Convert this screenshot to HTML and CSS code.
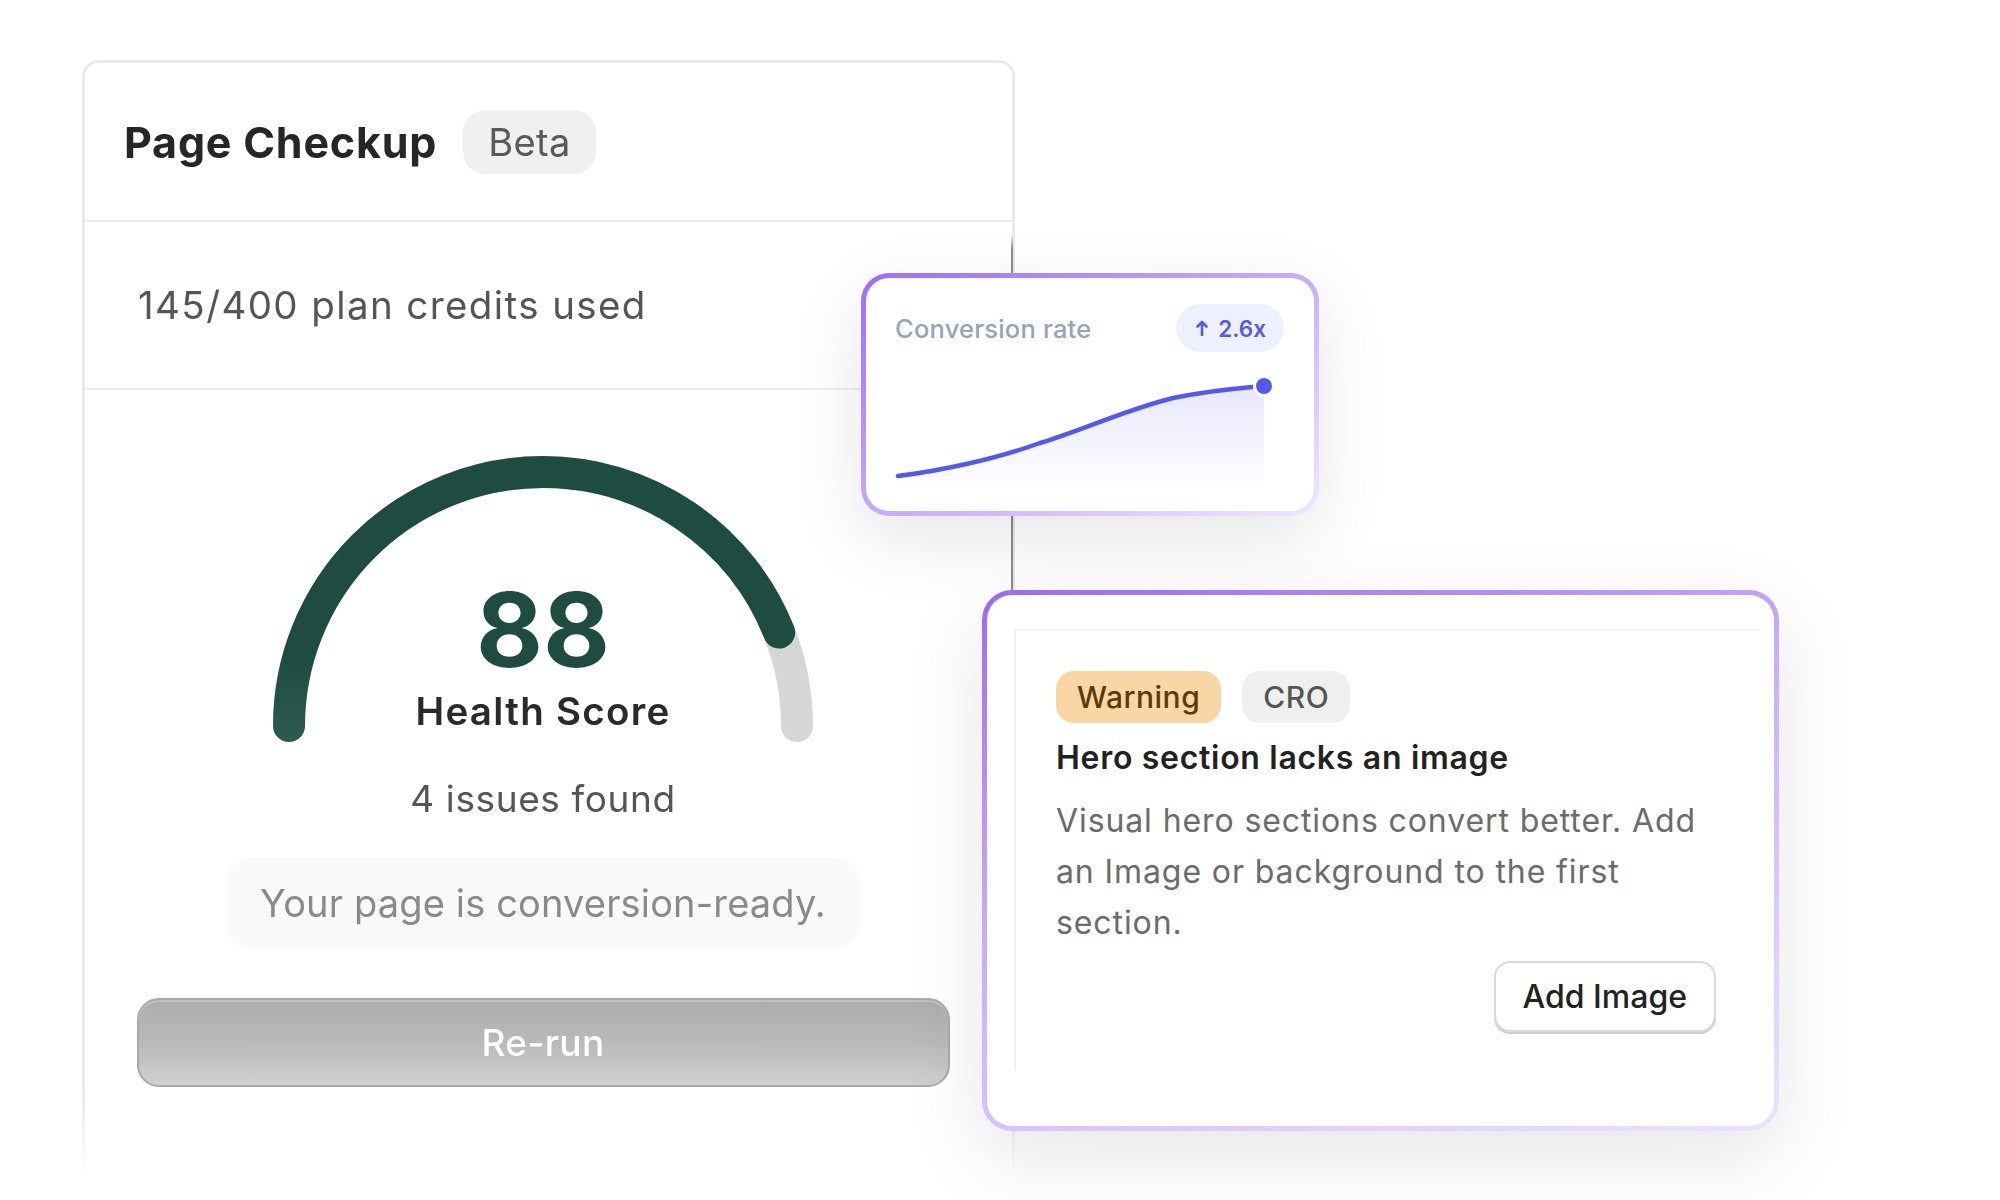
FILE: index.html
```html
<!DOCTYPE html>
<html lang="en">
<head>
    <meta charset="UTF-8">
    <meta name="viewport" content="width=device-width, initial-scale=1.0">
    <title>Page Checkup</title>
    <link rel="stylesheet" href="styles.css">
</head>
<body>

<div class="stage">

    <section class="checkup">
        <header class="checkup-head">
            <h1>Page Checkup</h1>
            <span class="tag">Beta</span>
        </header>
        <div class="credits">145/400 plan credits used</div>
        <div class="checkup-body">
            <div class="gauge">
                <svg class="gauge-arc" width="560" height="290" viewBox="0 0 560 290">
                    <defs>
                        <linearGradient id="arcGreen" gradientUnits="userSpaceOnUse" x1="0" y1="200" x2="0" y2="290">
                            <stop offset="0" stop-color="#1f4c40"/>
                            <stop offset="1" stop-color="#2f5c51"/>
                        </linearGradient>
                    </defs>
                    <!-- track -->
                    <path d="M26,270 A254,254 0 0 1 534,270" fill="none" stroke="#d6d6d6" stroke-width="32" stroke-linecap="round"/>
                    <!-- score, 88 of 100 -->
                    <path d="M26,270 A254,254 0 0 1 534,270" fill="none" stroke="url(#arcGreen)" stroke-width="32" stroke-linecap="round" pathLength="100" stroke-dasharray="88 100"/>
                </svg>
                <div class="score">
                    <div class="score-num">88</div>
                    <div class="score-label">Health Score</div>
                </div>
            </div>
            <p class="issues">4 issues found</p>
            <p class="verdict">Your page is conversion-ready.</p>
            <button class="rerun">Re-run</button>
        </div>
    </section>

    <div class="connector"></div>

    <!-- floating metric card -->
    <div class="rate-card">
        <div class="rate-head">
            <span class="rate-title">Conversion rate</span>
            <span class="rate-badge">
                <svg width="12" height="16" viewBox="0 0 12 16">
                    <path d="M6 15V2M1.5 6.5L6 2l4.5 4.5" fill="none" stroke="#5558f0" stroke-width="2.6" stroke-linecap="round" stroke-linejoin="round"/>
                </svg>
                2.6x
            </span>
        </div>
        <svg class="rate-chart" width="380" height="135" viewBox="0 0 380 135">
            <defs>
                <linearGradient id="areaFill" x1="0" y1="0" x2="0" y2="1">
                    <stop offset="0" stop-color="#5558f0" stop-opacity="0.14"/>
                    <stop offset="1" stop-color="#5558f0" stop-opacity="0"/>
                </linearGradient>
            </defs>
            <path d="M3,116 C43,111 98,100 145,83 C188,70 230,50 278,38 C318,30 348,28 369,26 L369,132 L3,132 Z" fill="url(#areaFill)"/>
            <path d="M3,116 C43,111 98,100 145,83 C188,70 230,50 278,38 C318,30 348,28 369,26" fill="none" stroke="#5558f0" stroke-width="4.5" stroke-linecap="round"/>
            <circle cx="369" cy="26" r="9.5" fill="#5558f0" stroke="#fff" stroke-width="3"/>
        </svg>
    </div>

    <!-- floating issue card -->
    <div class="issue-card">
        <div class="issue-frame">
            <div class="issue-tags">
                <span class="pill pill-warn">Warning</span>
                <span class="pill">CRO</span>
            </div>
            <h2 class="issue-title">Hero section lacks an image</h2>
            <p class="issue-text">Visual hero sections convert better. Add an Image or background to the first section.</p>
            <div class="issue-actions">
                <button class="add-btn">Add Image</button>
            </div>
        </div>
    </div>

</div>

</body>
</html>
```

FILE: styles.css
```css
* {
    box-sizing: border-box;
}
body {
    margin: 0;
    background: #fff;
    font-family: "Inter", "Liberation Sans", sans-serif;
    color: #222;
}
.stage {
    position: relative;
    width: 2000px;
    height: 1200px;
    overflow: hidden;
}

/* main card */
.checkup {
    width: 933px;
    height: 1120px;
    margin: 60px 0 0 82px;
    border: 3px solid #e9e9e9;
    border-bottom: none;
    border-radius: 16px 16px 0 0;
    background: #fff;
    -webkit-mask-image: linear-gradient(to bottom, #000 calc(100% - 90px), transparent);
    mask-image: linear-gradient(to bottom, #000 calc(100% - 90px), transparent);
}
.checkup-head {
    height: 159px;
    display: flex;
    align-items: center;
    gap: 26px;
    padding-left: 39px;
    border-bottom: 2px solid #ececec;
}
.checkup-head h1 {
    margin: 0;
    font-size: 43px;
    font-weight: 700;
    letter-spacing: 0.8px;
    color: #262626;
}
.tag {
    height: 64px;
    padding: 0 25px;
    border-radius: 22px;
    background: #f0f0f0;
    color: #5a5a5a;
    font-size: 38px;
    letter-spacing: 0.4px;
    line-height: 64px;
}
.credits {
    height: 168px;
    display: flex;
    align-items: center;
    padding-left: 53px;
    border-bottom: 2px solid #ececec;
    font-size: 38.5px;
    letter-spacing: 1.4px;
    color: #555;
}
.checkup-body {
    display: flex;
    flex-direction: column;
    align-items: center;
    padding: 66px 61px 0 50px;
}

.gauge {
    display: grid;
    justify-items: center;
}
.gauge > * {
    grid-area: 1 / 1;
}
.gauge-arc {
    display: block;
}
.score {
    padding-top: 122px;
    text-align: center;
}
.score-num {
    font-size: 103px;
    line-height: 1;
    font-weight: 700;
    color: #1f4c40;
}
.score-label {
    margin-top: 7px;
    font-size: 38.5px;
    line-height: 1.2;
    font-weight: 600;
    letter-spacing: 1.3px;
    color: #2a2a2a;
}
.issues {
    margin: 31px 0 0;
    font-size: 37px;
    line-height: 1.2;
    letter-spacing: 0.6px;
    color: #555;
}
.verdict {
    margin: 37px 0 0;
    height: 90px;
    padding: 0 34px;
    border-radius: 24px;
    background: #fafafa;
    font-size: 38px;
    line-height: 90px;
    letter-spacing: 0.15px;
    color: #8a8a8a;
}
.rerun {
    margin-top: 50px;
    width: 813px;
    height: 89px;
    border: 2px solid #a9a9a9;
    border-radius: 22px;
    background: linear-gradient(to bottom, #adadad, #b9b9b9 50%, #d0d0d0);
    box-shadow: inset 0 2px 0 rgba(255,255,255,0.25);
    font-family: inherit;
    font-size: 37px;
    font-weight: 500;
    letter-spacing: 0.3px;
    color: #fff;
}

.connector {
    position: absolute;
    left: 1011px;
    top: 235px;
    width: 2px;
    height: 355px;
    background: linear-gradient(to bottom, rgba(140,140,140,0), #8c8c8c 14px);
}

/* conversion rate card */
.rate-card {
    position: absolute;
    left: 861px;
    top: 273px;
    width: 458px;
    height: 243px;
    padding: 26px 30px 0 29px;
    border: 5px solid transparent;
    border-radius: 28px;
    background:
        linear-gradient(#fff, #fff) padding-box,
        linear-gradient(150deg, #9e6cf7, #c2a6fb 45%, #efe7fe) border-box;
    box-shadow: 0 22px 70px rgba(0,0,0,0.10);
}
.rate-head {
    display: flex;
    justify-content: space-between;
    align-items: center;
}
.rate-title {
    font-size: 25.5px;
    font-weight: 500;
    letter-spacing: 0.2px;
    color: #97a3b7;
}
.rate-badge {
    display: flex;
    align-items: center;
    gap: 10px;
    height: 48px;
    padding: 0 18px 0 20px;
    border-radius: 24px;
    background: #eef0fe;
    color: #5558f0;
    font-size: 22.5px;
    font-weight: 600;
}
.rate-chart {
    display: block;
    margin-top: 8px;
}

/* issue card */
.issue-card {
    position: absolute;
    left: 982px;
    top: 590px;
    width: 797px;
    height: 541px;
    padding: 34px 16px 0 27px;
    border: 5px solid transparent;
    border-radius: 30px;
    background:
        linear-gradient(#fff, #fff) padding-box,
        linear-gradient(160deg, #9b69f7, #c6abfb 40%, #ece3fe) border-box;
    box-shadow: 0 26px 80px rgba(0,0,0,0.10);
}
.issue-frame {
    border-top: 2px solid #f5f5f5;
    border-left: 2px solid #f0f0f0;
    padding: 40px 42px 38px 40px;
}
.issue-tags {
    display: flex;
    gap: 21px;
}
.pill {
    height: 52px;
    padding: 0 21px;
    border-radius: 18px;
    background: #efefef;
    color: #555;
    font-size: 30px;
    font-weight: 500;
    letter-spacing: 0.5px;
    line-height: 52px;
}
.pill-warn {
    background: #f8d7a4;
    color: #5c3b0b;
}
.issue-title {
    margin: 14px 0 0;
    font-size: 32px;
    line-height: 1.3;
    font-weight: 600;
    letter-spacing: 0.7px;
    color: #222;
}
.issue-text {
    margin: 16px 0 0;
    font-size: 32px;
    line-height: 51px;
    letter-spacing: 0.9px;
    color: #6b6b6b;
}
.issue-actions {
    display: flex;
    justify-content: flex-end;
    margin-top: 13px;
}
.add-btn {
    height: 71px;
    padding: 0 27px;
    border: 2px solid #dadada;
    border-radius: 16px;
    background: #fff;
    box-shadow: 0 2px 0 #cfcfcf;
    font-family: inherit;
    font-size: 32px;
    font-weight: 500;
    color: #222;
}
```
